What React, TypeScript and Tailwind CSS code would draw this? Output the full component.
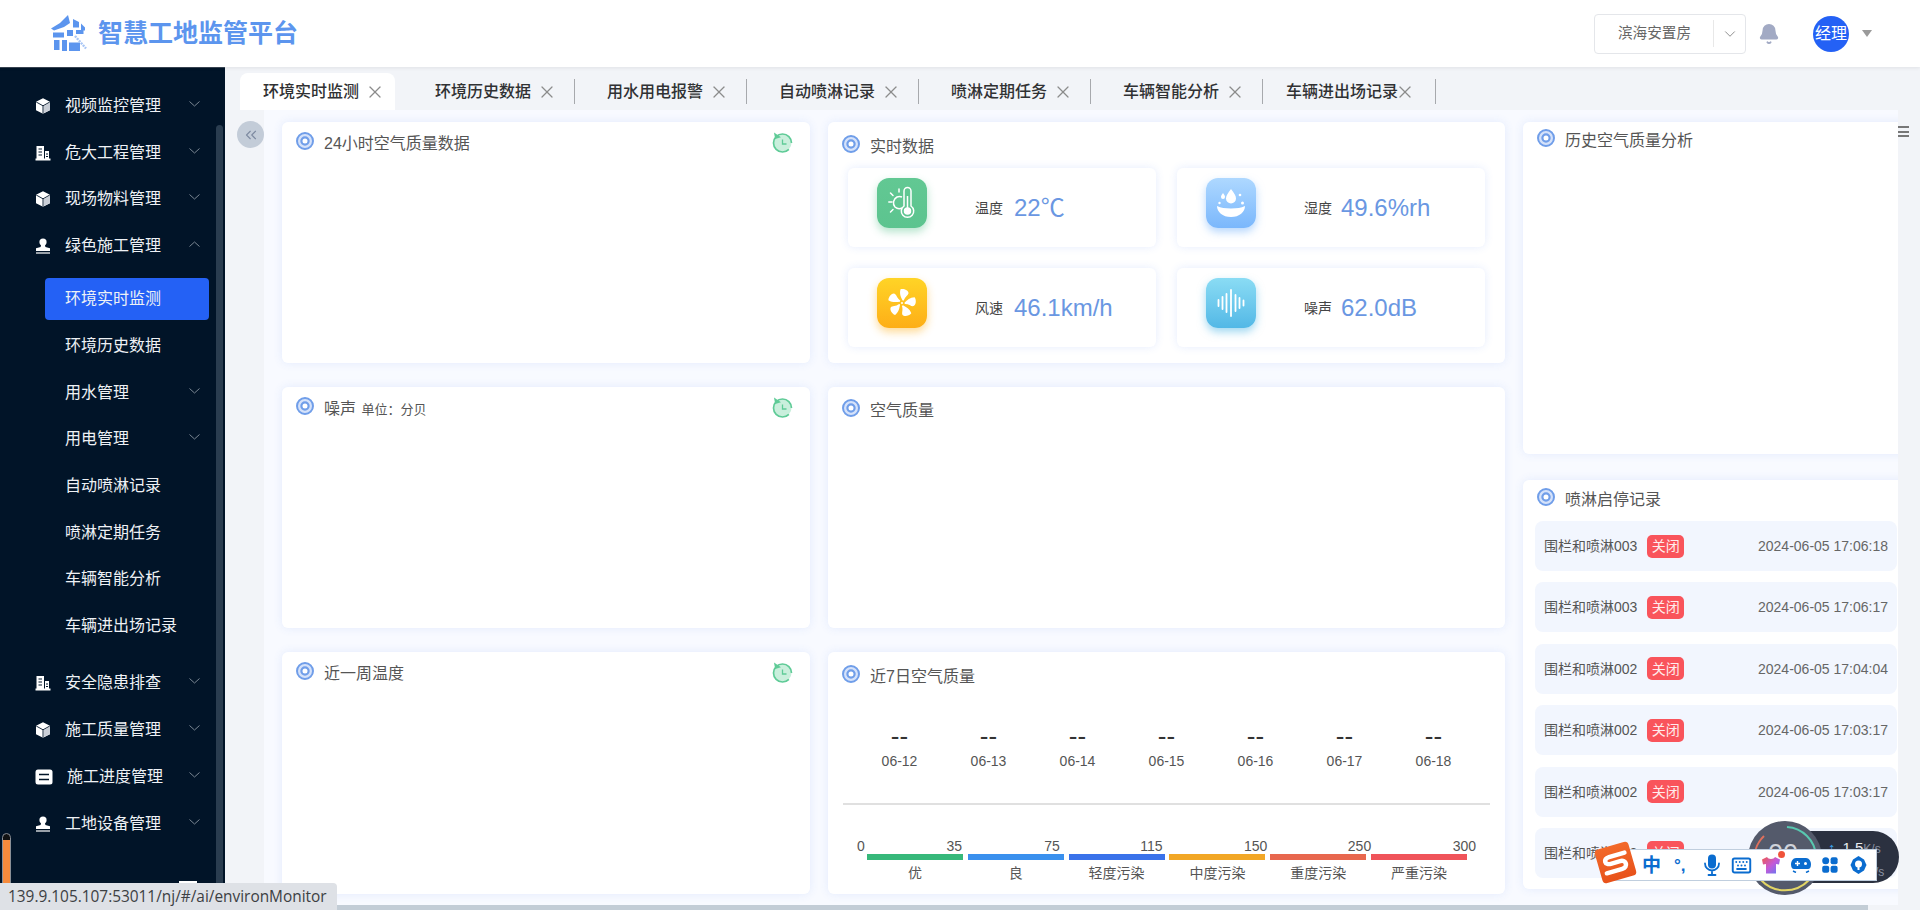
import React from "react";
import { X, Bell, ChevronDown, ChevronsLeft, Keyboard } from "lucide-react";

type MenuItem = { label: string; icon?: "cube" | "building" | "stamp" | "stack"; arrow?: "down" | "up"; textClass?: string };

const menuTop: MenuItem[] = [
  { label: "视频监控管理", icon: "cube", arrow: "down" },
  { label: "危大工程管理", icon: "building", arrow: "down" },
  { label: "现场物料管理", icon: "cube", arrow: "down" },
  { label: "绿色施工管理", icon: "stamp", arrow: "up" },
];

const subMenu: MenuItem[] = [
  { label: "环境实时监测" },
  { label: "环境历史数据" },
  { label: "用水管理", arrow: "down" },
  { label: "用电管理", arrow: "down" },
  { label: "自动喷淋记录" },
  { label: "喷淋定期任务" },
  { label: "车辆智能分析" },
  { label: "车辆进出场记录" },
];

const menuBottom: MenuItem[] = [
  { label: "安全隐患排查", icon: "building", arrow: "down" },
  { label: "施工质量管理", icon: "cube", arrow: "down" },
  { label: "施工进度管理", icon: "stack", arrow: "down", textClass: "ml-[3px]" },
  { label: "工地设备管理", icon: "stamp", arrow: "down" },
];

const tabs = ["环境实时监测", "环境历史数据", "用水用电报警", "自动喷淋记录", "喷淋定期任务", "车辆智能分析"];

const records = [
  { name: "围栏和喷淋003", time: "2024-06-05 17:06:18" },
  { name: "围栏和喷淋003", time: "2024-06-05 17:06:17" },
  { name: "围栏和喷淋002", time: "2024-06-05 17:04:04" },
  { name: "围栏和喷淋002", time: "2024-06-05 17:03:17" },
  { name: "围栏和喷淋002", time: "2024-06-05 17:03:17" },
  { name: "围栏和喷淋002", time: "2024-06-05 17:03:17" },
];

const days = ["06-12", "06-13", "06-14", "06-15", "06-16", "06-17", "06-18"];

const levels = [
  { top: "35", label: "优", bar: "bg-[#36b87a]", shift: "mr-[1px]" },
  { top: "75", label: "良", bar: "bg-[#3a90ee]", shift: "mr-[4px]" },
  { top: "115", label: "轻度污染", bar: "bg-[#3a72ea]", shift: "mr-[2px]" },
  { top: "150", label: "中度污染", bar: "bg-[#f2a726]", shift: "-mr-[2px]" },
  { top: "250", label: "重度污染", bar: "bg-[#e8674e]", shift: "-mr-[5px]" },
  { top: "300", label: "严重污染", bar: "bg-[#f0545a]", shift: "-mr-[9px]" },
];

function MenuIcon({ name }: { name?: MenuItem["icon"] }) {
  if (name === "cube") {
    return (
      <svg width="16" height="16" viewBox="0 0 16 16" className="shrink-0">
        <path d="M8 0.3 15 3.7V12.2L8 15.8 1 12.2V3.7Z" fill="#fff" />
        <path d="M8.6 8.2 15 4.6V12L8.6 15.3Z" fill="#c9ced6" />
        <path d="M1.2 4 8 7.8 14.8 4M8 7.8V15.6" fill="none" stroke="#011428" strokeWidth="0.9" />
      </svg>
    );
  }
  if (name === "building") {
    return (
      <svg width="16" height="16" viewBox="0 0 16 16" className="shrink-0">
        <path d="M1.5 1H9V14H1.5ZM10 6H14V14H10ZM0.5 13.5H15.5V15.5H0.5Z" fill="#fff" />
        <path d="M3.5 4H7M3.5 7H7M3.5 10H7M11 9H13M11 11.5H13" stroke="#011428" strokeWidth="1.1" />
      </svg>
    );
  }
  if (name === "stamp") {
    return (
      <svg width="16" height="16" viewBox="0 0 16 16" className="shrink-0">
        <circle cx="8" cy="4" r="3.6" fill="#fff" />
        <path d="M6 7H10L10.4 9 15 10.2V13H1V10.2L5.6 9Z" fill="#fff" />
        <path d="M1 15H15" stroke="#fff" strokeWidth="1.2" />
      </svg>
    );
  }
  return (
    <svg width="18" height="16" viewBox="0 0 18 16" className="shrink-0">
      <rect x="0.5" y="0.5" width="17" height="15" rx="2.5" fill="#fff" />
      <path d="M4 5.5H14M4 10.5H14" stroke="#011428" strokeWidth="1.6" />
    </svg>
  );
}

function Arrow({ dir }: { dir?: "down" | "up" }) {
  if (!dir) return null;
  return (
    <svg width="11" height="6" viewBox="0 0 11 6" className="-mt-[4px] shrink-0">
      <path d={dir === "down" ? "M0.5 0.5 5.5 5 10.5 0.5" : "M0.5 5.5 5.5 1 10.5 5.5"} fill="none" stroke="#7a8592" strokeWidth="1" />
    </svg>
  );
}

function TopRow({ item }: { item: MenuItem }) {
  return (
    <div className="flex h-[46.7px] w-[200px] items-center pl-[35px]">
      <MenuIcon name={item.icon} />
      <span className={`ml-[14px] flex-1 text-base text-[#eef1f5] ${item.textClass || ""}`}>{item.label}</span>
      <Arrow dir={item.arrow} />
    </div>
  );
}

function Sidebar() {
  return (
    <aside className="relative h-full w-[225px] shrink-0 overflow-hidden border-t border-[#3a4654] bg-[#011428] pt-[14.5px]">
      {menuTop.map((m) => (
        <TopRow key={m.label} item={m} />
      ))}
      <div className="pt-[6.6px] pb-[10.8px]">
        {subMenu.map((m, i) => (
          <div key={m.label} className="flex h-[46.7px] w-[200px] items-center">
            <div className={`ml-[45px] flex h-[42px] flex-1 items-center rounded pl-[20px] ${i === 0 ? "w-[164px] flex-none bg-[#2461f5]" : ""}`}>
              <span className="flex-1 text-base text-[#eef1f5]">{m.label}</span>
              <Arrow dir={m.arrow} />
            </div>
          </div>
        ))}
      </div>
      {menuBottom.map((m) => (
        <TopRow key={m.label} item={m} />
      ))}
      <div className="mt-[34px] ml-[179px] h-[5px] w-[18px] bg-white" />
      <div className="absolute top-[57px] right-[2px] bottom-0 w-[7px] rounded-t bg-[#2a3d50]" />
    </aside>
  );
}

function Ring() {
  return (
    <svg width="18" height="18" viewBox="0 0 18 18" className="shrink-0">
      <circle cx="9" cy="9" r="8" fill="#d5e2fa" stroke="#709ee9" strokeWidth="2" />
      <circle cx="9" cy="9" r="3.6" fill="#fff" stroke="#709ee9" strokeWidth="2.2" />
    </svg>
  );
}

function Refresh() {
  return (
    <svg width="21" height="21" viewBox="0 0 21 21" className="shrink-0">
      <circle cx="10.5" cy="11" r="9" fill="#c9efdc" stroke="#5fcb97" strokeWidth="1.7" strokeDasharray="50 7" strokeDashoffset="-7" />
      <path d="M2 0.5 3.2 7 9 5.2Z" fill="#5fcb97" />
      <path d="M10.5 7.5V12H14.5" fill="none" stroke="#5fcb97" strokeWidth="1.3" />
    </svg>
  );
}

function CardTitle({ children, className, refresh }: { children: React.ReactNode; className: string; refresh?: boolean }) {
  return (
    <div className={`flex items-start pl-[14px] ${className}`}>
      <Ring />
      <div className="mt-[1px] ml-[10px] flex-1 text-base leading-[22px] text-[#555]">{children}</div>
      {refresh && (
        <div className="mr-[17px]">
          <Refresh />
        </div>
      )}
    </div>
  );
}

function Card({ className, children }: { className: string; children?: React.ReactNode }) {
  return <section className={`overflow-hidden rounded-md bg-white shadow-[0_0_10px_rgba(70,120,240,0.12)] ${className}`}>{children}</section>;
}

function IconTile({ kind }: { kind: "temp" | "water" | "fan" | "wave" }) {
  const bg = {
    temp: "bg-gradient-to-b from-[#62c893] to-[#5cc48f] shadow-[0_4px_8px_rgba(92,196,143,0.45)]",
    water: "bg-gradient-to-b from-[#aed8ff] to-[#7ab7fc] shadow-[0_4px_8px_rgba(122,183,252,0.55)]",
    fan: "bg-gradient-to-b from-[#ffd426] to-[#fdae17] shadow-[0_4px_8px_rgba(253,174,23,0.45)]",
    wave: "bg-gradient-to-b from-[#8adcf4] to-[#52b8e6] shadow-[0_4px_8px_rgba(82,184,230,0.55)]",
  }[kind];
  return (
    <div className={`flex h-[50px] w-[50px] shrink-0 items-center justify-center rounded-xl ${bg}`}>
      {kind === "temp" && (
        <svg width="28" height="34" viewBox="0 0 28 34" fill="none" stroke="#fff" strokeWidth="1.5">
          <path d="M16 5a3.500 3.500 0 0 1 7 0V20a6.200 6.200 0 1 1-7 0Z" />
          <circle cx="19.500" cy="25" r="3" fill="#fff" />
          <path d="M19.500 10V23" />
          <path d="M14 11A6.500 6.500 0 0 0 9 11 6.500 6.500 0 0 0 7 21 6.500 6.500 0 0 0 14 22" />
          <path d="M0.800 16H4M2.500 7l2.500 2.500M2.500 26l2.500-2.500M11 3V6" strokeLinecap="round" />
        </svg>
      )}
      {kind === "water" && (
        <svg width="30" height="32" viewBox="0 0 30 32" fill="#fff">
          <path d="M15 2c3 4 5 6.500 5 9.500a5 5 0 0 1-10 0C10 8.500 12 6 15 2Z" />
          <path d="M7 6c1.300 1.800 2 2.800 2 4a2 2 0 0 1-4 0c0-1.200.7-2.200 2-4Z" />
          <circle cx="24" cy="8" r="1.300" />
          <circle cx="26.500" cy="16" r="1.500" />
          <circle cx="3.500" cy="16" r="1.200" />
          <path d="M1 19c4 2.200 8 2.400 14 2.400S25 21 29 19c0 6-5.500 11-14 11S1 25 1 19Z" />
        </svg>
      )}
      {kind === "fan" && (
        <svg width="30" height="30" viewBox="-15 -15 30 30" fill="#fff">
          <circle r="1" />
          {[0, 72, 144, 216, 288].map((r) => (
            <path key={r} transform={`rotate(${r})`} d="M0.600 -2.400C-1 -6 -2.800 -9 -1.500 -13.800C2 -14.800 6.500 -12.500 6.500 -10C6.500 -7.800 3 -6.500 1.800 -2.400Z" />
          ))}
        </svg>
      )}
      {kind === "wave" && (
        <svg width="28" height="28" viewBox="0 0 28 28" stroke="#fff" strokeWidth="1.8" strokeLinecap="round">
          <path d="M1.500 11V17M5.500 8V20M9.500 5V23M14 1V27M18.500 6V22M22.500 9V19M26.500 11.500V16.500" />
        </svg>
      )}
    </div>
  );
}

function Metric({ kind, label, value, valueClass }: { kind: "temp" | "water" | "fan" | "wave"; label: string; value: string; valueClass: string }) {
  return (
    <div className="flex h-[79px] w-[308px] items-center rounded-md bg-white pl-[29px] shadow-[0_0_8px_rgba(70,120,240,0.14)]">
      <div className="-mt-[10px]">
        <IconTile kind={kind} />
      </div>
      <span className="ml-[48px] text-sm text-[#444]">{label}</span>
      <span className={`text-2xl text-[#6a97e2] ${valueClass}`}>{value}</span>
    </div>
  );
}

function Logo() {
  return (
    <svg width="38" height="37" viewBox="0 0 38 37" fill="#5c95ee">
      <path d="M18 0 20 8 14 12 4 15.500 1 13.500 10 8Z" />
      <path d="M23 4 29 7V12.500H23ZM31 8.500 35 12.500V15.500H31Z" />
      <path d="M3 17.500H14V22.500H3ZM17 15H23V21H17ZM26 15H33.500V19H26Z" />
      <path d="M4 25H9.500V35H4ZM12 25H17V36H12ZM19 27.500H30V36H19Z" />
      <path d="M25 21 36 33.500" fill="none" stroke="#a9c6f5" strokeWidth="2.400" strokeDasharray="2 1" />
    </svg>
  );
}

function Header() {
  return (
    <header className="relative z-10 flex h-[67px] shrink-0 items-center bg-white pl-[50px] shadow-[0_1px_4px_rgba(0,0,0,0.08)]">
      <Logo />
      <span className="ml-[10px] text-[25px] leading-none font-bold text-[#5c95ee]">智慧工地监管平台</span>
      <div className="ml-auto flex h-[40px] w-[152px] items-center rounded border border-[#e4e6ea]">
        <span className="w-[118px] pl-[23px] text-[14.6px] text-[#666]">滨海安置房</span>
        <div className="flex h-[27px] flex-1 items-center justify-center border-l border-[#e8e8e8]">
          <ChevronDown size={18} strokeWidth={1.1} color="#777" />
        </div>
      </div>
      <div className="ml-[12px]">
        <Bell size={22} fill="#a2aac4" color="#a2aac4" />
      </div>
      <div className="ml-[33px] flex h-[36px] w-[36px] items-center justify-center rounded-full bg-[#2461f5] text-base whitespace-nowrap text-white">经理</div>
      <div className="mr-[48px] ml-[13px] h-0 w-0 border-x-[5px] border-t-[7px] border-x-transparent border-t-[#9a9a9a]" />
    </header>
  );
}

function TabsBar() {
  return (
    <div className="flex h-[43px] shrink-0 items-end pl-[6px]">
      {tabs.map((t, i) => (
        <div key={t} className="flex h-[37px] w-[172px] shrink-0 items-center">
          <div className={`flex h-full flex-1 items-center ${i === 0 ? "mr-[8px] ml-[9px] rounded-t-lg bg-white pl-[23px]" : "pl-[32px]"}`}>
            <span className="text-base font-medium text-[#303133]">{t}</span>
            <X size={20} strokeWidth={1.5} color="#8c8c8c" className="ml-[6px]" />
          </div>
          {i > 0 && <div className="h-[25px] w-px bg-[#a7a9ad]" />}
        </div>
      ))}
      <div className="flex h-[37px] w-[173px] shrink-0 items-center pl-[23px]">
        <span className="text-base font-medium text-[#303133]">车辆进出场记录</span>
        <X size={20} strokeWidth={1.5} color="#8c8c8c" className="-ml-[3px]" />
        <div className="ml-auto h-[25px] w-px bg-[#a7a9ad]" />
      </div>
    </div>
  );
}

function LeftColumns() {
  return (
    <div className="grid grid-cols-[528px_677px] grid-rows-[241px_241px_242px] gap-x-[18px] gap-y-[24px]">
      <Card className="">
        <CardTitle className="pt-[10px]" refresh>24小时空气质量数据</CardTitle>
      </Card>
      <Card className="">
        <CardTitle className="pt-[13px]">实时数据</CardTitle>
        <div className="mt-[10px] grid grid-cols-[308px_308px] gap-x-[21px] gap-y-[21px] pl-[20px]">
          <Metric kind="temp" label="温度" value="22℃" valueClass="ml-[11px]" />
          <Metric kind="water" label="湿度" value="49.6%rh" valueClass="ml-[9px]" />
          <Metric kind="fan" label="风速" value="46.1km/h" valueClass="ml-[11px]" />
          <Metric kind="wave" label="噪声" value="62.0dB" valueClass="ml-[9px]" />
        </div>
      </Card>
      <Card className="">
        <CardTitle className="pt-[10px]" refresh>
          噪声 <span className="ml-[1px] text-[13px] text-[#555]">单位：分贝</span>
        </CardTitle>
      </Card>
      <Card className="">
        <CardTitle className="pt-[12px]">空气质量</CardTitle>
      </Card>
      <Card className="">
        <CardTitle className="pt-[10px]" refresh>近一周温度</CardTitle>
      </Card>
      <Card className="">
        <CardTitle className="pt-[13px]">近7日空气质量</CardTitle>
        <div className="mt-[36px] grid grid-cols-7 px-[27px] text-center">
          {days.map((d) => (
            <div key={d}>
              <div className="h-[24px] text-[26px] leading-[24px] text-[#333]">--</div>
              <div className="mt-[3px] text-sm leading-[20px] text-[#555]">{d}</div>
            </div>
          ))}
        </div>
        <div className="mx-[15px] mt-[32px] h-[2px] bg-[#e0e0e0]" />
        <div className="mt-[33px] flex pl-[39px]">
          {levels.map((l, i) => (
            <div key={l.top} className={`w-[96px] shrink-0 ${i === 0 ? "" : "ml-[4.800px]"}`}>
              <div className="flex h-[16px] items-center justify-between text-sm leading-[16px] text-[#555]">
                <span className="-ml-[10px]">{i === 0 ? "0" : ""}</span>
                <span className={l.shift}>{l.top}</span>
              </div>
              <div className={`h-[6px] ${l.bar}`} />
              <div className="mt-[3px] text-center text-sm leading-[20px] text-[#555]">{l.label}</div>
            </div>
          ))}
        </div>
      </Card>
    </div>
  );
}

function RightColumn() {
  return (
    <div className="ml-[18px] flex w-[387px] shrink-0 flex-col">
      <Card className="h-[332px] shrink-0">
        <CardTitle className="pt-[7px]">历史空气质量分析</CardTitle>
      </Card>
      <Card className="mt-[26px] h-[409px] shrink-0">
        <CardTitle className="pt-[8px]">喷淋启停记录</CardTitle>
        <div className="mt-[10px] ml-[12px] flex w-[362px] flex-col gap-[11.400px]">
          {records.map((r, i) => (
            <div key={i} className="flex h-[50px] items-center rounded-lg bg-[#f2f6fe] pr-[9px] pl-[9px] text-sm">
              <span className="text-[#555]">{r.name}</span>
              <span className="ml-[10px] flex h-[23px] w-[37px] items-center justify-center rounded-[5px] bg-[#f9545b] text-[#ffecec]">关闭</span>
              <span className="ml-auto text-[#666]">{r.time}</span>
            </div>
          ))}
        </div>
      </Card>
    </div>
  );
}

function NetMeter() {
  return (
    <div className="absolute top-[820px] left-[1747px] z-20 flex h-[76px] w-[153px] items-center">
      <div className="absolute top-[11px] left-[30px] h-[52px] w-[122px] rounded-full bg-[#2b3140]">
        <div className="absolute top-[9px] left-[51px] text-[15px] leading-none whitespace-nowrap text-[#e8ebf0]">
          <span className="mr-[7px] font-bold text-[#3aa0e8]">↑</span>1.5<span className="text-[12px] text-[#8c93a3]">K/s</span>
        </div>
        <div className="absolute top-[35px] left-[90px] text-[12px] leading-none text-[#8c93a3]">K/s</div>
      </div>
      <svg width="76" height="76" viewBox="0 0 76 76" className="relative">
        <circle cx="38" cy="38" r="37" fill="#545a6b" />
        <path d="M40 7A31 31 0 0 1 69 36" fill="none" stroke="#58c8b0" strokeWidth="2" />
        <path d="M8 44A31 31 0 0 1 17 16" fill="none" stroke="#e0705c" strokeWidth="2" />
        <path d="M14 60A33 33 0 0 0 62 60" fill="none" stroke="#e2d565" strokeWidth="2" />
      </svg>
      <div className="absolute top-[21px] left-[21px] text-[27px] leading-none text-[#cfd3da]">00</div>
    </div>
  );
}

function ImeBar() {
  return (
    <div className="absolute top-[849px] left-[1613px] z-30 flex h-[32px] w-[264px] items-center border border-[#c0cede] bg-white pl-[28px] text-[#0a6ccf]">
      <div className="absolute top-[-5px] left-[-16px] flex h-[35px] w-[35px] -rotate-[16deg] items-center justify-center rounded-[4px] bg-gradient-to-b from-[#f2692a] to-[#e8521a]">
        <svg width="29" height="22" viewBox="0 0 27 20" fill="none" stroke="#fff" strokeWidth="4.200" strokeLinecap="round">
          <path d="M24 3H9C3 3 3 9.500 9 9.500H18C24 9.500 24 17 18 17H3" />
        </svg>
      </div>
      <span className="w-[18px] text-[19px] leading-none font-bold">中</span>
      <span className="ml-[14px] w-[20px] text-[17px] leading-none font-bold">°,</span>
      <svg width="16" height="22" viewBox="0 0 16 22" className="ml-[10px]" fill="none" stroke="#0a6ccf" strokeWidth="1.800">
        <rect x="4" y="0.500" width="8" height="14" rx="4" fill="#0a6ccf" stroke="none" />
        <path d="M1 9.500A7 7 0 0 0 15 9.500M8 16.500V21M4.500 21H11.500" strokeLinecap="round" />
      </svg>
      <div className="ml-[11px]">
        <Keyboard size={21} strokeWidth={2.2} />
      </div>
      <div className="relative ml-[9px]">
        <svg width="20" height="20" viewBox="0 0 20 20">
          <defs>
            <linearGradient id="shirt" x1="0" y1="0" x2="1" y2="1">
              <stop offset="0" stopColor="#f0584c" />
              <stop offset="0.5" stopColor="#c45ad8" />
              <stop offset="1" stopColor="#5a7cf5" />
            </linearGradient>
          </defs>
          <path d="M6 2 1 4.500 2 9.500 5 9V18.500H15V9L18 9.500 19 4.500 14 2C13 4.500 7 4.500 6 2Z" fill="url(#shirt)" />
        </svg>
        <div className="absolute -top-[4px] -right-[4px] h-[7px] w-[7px] rounded-full bg-[#f0533a]" />
      </div>
      <svg width="20" height="16" viewBox="0 0 20 16" className="ml-[10px]" fill="#0a6ccf">
        <path d="M5 1H15C18 1 20 4 20 7.500C20 10 19 12 17 12H3C1 12 0 10 0 7.500C0 4 2 1 5 1Z" />
        <path d="M4 6.500H9M6.500 4V9" stroke="#fff" strokeWidth="1.400" />
        <circle cx="14.500" cy="6.500" r="1.500" fill="#fff" />
        <path d="M2 14 5 15.500M18 14 15 15.500" stroke="#0a6ccf" strokeWidth="1.500" />
      </svg>
      <svg width="16" height="16" viewBox="0 0 16 16" className="ml-[11px]" fill="#0a6ccf">
        <circle cx="3.700" cy="3.700" r="3.500" />
        <rect x="8.600" y="0.200" width="7" height="7" rx="2" />
        <rect x="0.200" y="8.800" width="7" height="7" rx="2" />
        <rect x="8.600" y="8.800" width="7" height="7" rx="2" />
      </svg>
      <svg width="17" height="18" viewBox="0 0 17 18" className="ml-[12px]" fill="#0a6ccf">
        <path d="M8.500 0 14 3.500 16.500 9 14 14.500 8.500 18 3 14.500 0.500 9 3 3.500Z" />
        <circle cx="8.500" cy="8" r="3.500" fill="#fff" />
        <rect x="7.500" y="8" width="2" height="6" fill="#fff" />
      </svg>
    </div>
  );
}

function OverlayBits() {
  return (
    <>
      <div className="absolute top-[833px] left-[2px] z-30 h-[60px] w-[9px] overflow-hidden rounded-full border border-[#8a8f96] bg-[#111] pt-[6px]">
        <div className="h-full bg-[#f58a3c]" />
      </div>
      <div className="absolute top-[883px] left-0 z-30 flex h-[27px] w-[337px] items-center rounded-tr bg-[#dee1e6] pl-[8px] font-['Open_Sans',sans-serif] text-[15.400px] leading-none whitespace-nowrap text-[#3c4043]">
        139.9.105.107:53011/nj/#/ai/environMonitor
      </div>
      <div className="absolute top-[126px] left-[1898px] z-20 flex h-[11px] w-[11px] flex-col justify-between">
        <div className="h-[2px] bg-[#777]" />
        <div className="h-[2px] bg-[#777]" />
        <div className="h-[2px] bg-[#777]" />
      </div>
    </>
  );
}

export default function App() {
  return (
    <div className="relative flex h-[910px] w-[1920px] flex-col overflow-hidden bg-[#f2f4f8] font-['Liberation_Sans','Noto_Sans_CJK_SC',sans-serif]">
      <Header />
      <div className="flex min-h-0 flex-1">
        <Sidebar />
        <main className="flex min-w-0 flex-1 flex-col">
          <TabsBar />
          <div className="flex min-h-0 flex-1">
            <div className="w-[39px] shrink-0 pt-[11px] pl-[12px]">
              <div className="flex h-[27px] w-[27px] items-center justify-center rounded-full bg-[#c3ccd8]">
                <ChevronsLeft size={18} strokeWidth={1.5} color="#7d8aa0" />
              </div>
            </div>
            <div className="flex w-[1634px] shrink-0 flex-col">
              <div className="flex min-h-0 flex-1 overflow-hidden bg-[#f8faff] pt-[12px] pl-[18px]">
                <LeftColumns />
                <RightColumn />
              </div>
              <div className="h-[5px] w-[1604px] shrink-0 bg-[#c3cdd6]" />
            </div>
          </div>
        </main>
      </div>
      <NetMeter />
      <ImeBar />
      <OverlayBits />
    </div>
  );
}
